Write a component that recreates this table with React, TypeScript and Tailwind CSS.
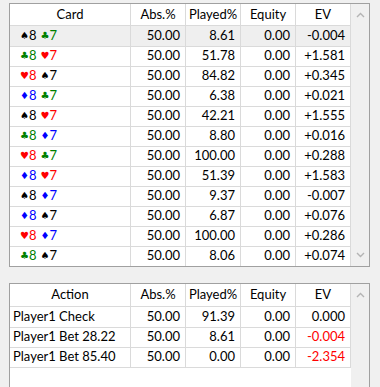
import React from 'react';

// Suit colours as drawn by the grid
const SUIT_STYLE: Record<string, { glyph: string; color: string }> = {
  s: { glyph: '♠', color: 'text-black' },
  c: { glyph: '♣', color: 'text-[#008000]' },
  h: { glyph: '♥', color: 'text-[#ff0000]' },
  d: { glyph: '♦', color: 'text-[#0000ff]' },
};

type HandRow = { hand: [string, string]; abs: string; played: string; equity: string; ev: string };

const handRows: HandRow[] = [
  { hand: ['s', 'c'], abs: '50.00', played: '8.61', equity: '0.00', ev: '-0.004' },
  { hand: ['c', 'h'], abs: '50.00', played: '51.78', equity: '0.00', ev: '+1.581' },
  { hand: ['h', 's'], abs: '50.00', played: '84.82', equity: '0.00', ev: '+0.345' },
  { hand: ['d', 'c'], abs: '50.00', played: '6.38', equity: '0.00', ev: '+0.021' },
  { hand: ['s', 'h'], abs: '50.00', played: '42.21', equity: '0.00', ev: '+1.555' },
  { hand: ['c', 'd'], abs: '50.00', played: '8.80', equity: '0.00', ev: '+0.016' },
  { hand: ['h', 'c'], abs: '50.00', played: '100.00', equity: '0.00', ev: '+0.288' },
  { hand: ['d', 'h'], abs: '50.00', played: '51.39', equity: '0.00', ev: '+1.583' },
  { hand: ['s', 'd'], abs: '50.00', played: '9.37', equity: '0.00', ev: '-0.007' },
  { hand: ['d', 's'], abs: '50.00', played: '6.87', equity: '0.00', ev: '+0.076' },
  { hand: ['h', 'd'], abs: '50.00', played: '100.00', equity: '0.00', ev: '+0.286' },
  { hand: ['c', 's'], abs: '50.00', played: '8.06', equity: '0.00', ev: '+0.074' },
];

const actionRows = [
  { action: 'Player1 Check', abs: '50.00', played: '91.39', equity: '0.00', ev: '0.000', neg: false },
  { action: 'Player1 Bet 28.22', abs: '50.00', played: '8.61', equity: '0.00', ev: '-0.004', neg: true },
  { action: 'Player1 Bet 85.40', abs: '50.00', played: '0.00', equity: '0.00', ev: '-2.354', neg: true },
];

const COLS = 'grid grid-cols-[121px_55px_55px_55px_55px]';
const cell = 'border-r border-b border-[#dadada] flex items-center';
const numCell = `${cell} justify-end pr-[5px]`;

const Card = ({ suit, rank }: { suit: string; rank: string }) => {
  const s = SUIT_STYLE[suit];
  return (
    <span className={`${s.color} inline-flex items-center`}>
      <span className="text-[10px] leading-none" style={{ fontFamily: '"DejaVu Sans", sans-serif' }}>{s.glyph}</span>
      <span>{rank}</span>
    </span>
  );
};

const Chevron = ({ up }: { up: boolean }) => (
  <svg width="9" height="6" viewBox="0 0 9 6" className="text-[#b4b4b4]">
    <polyline
      points={up ? '1,5 4.5,1.5 8,5' : '1,1 4.5,4.5 8,1'}
      fill="none"
      stroke="currentColor"
      strokeWidth="1.4"
    />
  </svg>
);

const Header = ({ first }: { first: string }) => (
  <div className={`${COLS} h-[23px]`}>
    {[first, 'Abs.%', 'Played%', 'Equity', 'EV'].map((h) => (
      <div key={h} className={`${cell} justify-center`}>{h}</div>
    ))}
  </div>
);

export default function App() {
  return (
    <div
      className="w-[380px] h-[387px] bg-[#f0f0f0] pt-[3px] pl-[9px] overflow-hidden text-[13px] text-black"
      style={{ fontFamily: 'Lato, "Noto Sans", sans-serif' }}
    >
      {/* Hand grid */}
      <div className="w-[361px] h-[264px] border border-[#a0a0a0] bg-white flex overflow-hidden">
        <div className="w-[341px] flex flex-col">
          <Header first="Card" />
          {handRows.map((r, i) => (
            <div key={i} className={`${COLS} h-[20px] ${i === 0 ? 'bg-[#efefef]' : ''}`}>
              <div className={`${cell} pl-[10px] gap-[4px]`}>
                <Card suit={r.hand[0]} rank="8" />
                <Card suit={r.hand[1]} rank="7" />
              </div>
              <div className={numCell}>{r.abs}</div>
              <div className={numCell}>{r.played}</div>
              <div className={numCell}>{r.equity}</div>
              <div className={numCell}>{r.ev}</div>
            </div>
          ))}
        </div>
        <div className="w-[18px] bg-[#f0f0f0] flex flex-col items-center justify-between py-[8px]">
          <Chevron up />
          <Chevron up={false} />
        </div>
      </div>

      {/* Action grid */}
      <div className="mt-[16px] w-[361px] h-[110px] border border-[#a0a0a0] bg-white flex overflow-hidden">
        <div className="w-[341px] flex flex-col">
          <Header first="Action" />
          {actionRows.map((r) => (
            <div key={r.action} className={`${COLS} h-[20px]`}>
              <div className={`${cell} pl-[3px]`}>{r.action}</div>
              <div className={numCell}>{r.abs}</div>
              <div className={numCell}>{r.played}</div>
              <div className={numCell}>{r.equity}</div>
              <div className={`${numCell} ${r.neg ? 'text-[#ff0000]' : ''}`}>{r.ev}</div>
            </div>
          ))}
        </div>
        <div className="w-[18px] bg-[#f0f0f0] flex flex-col items-center pt-[8px]">
          <Chevron up />
        </div>
      </div>
    </div>
  );
}
